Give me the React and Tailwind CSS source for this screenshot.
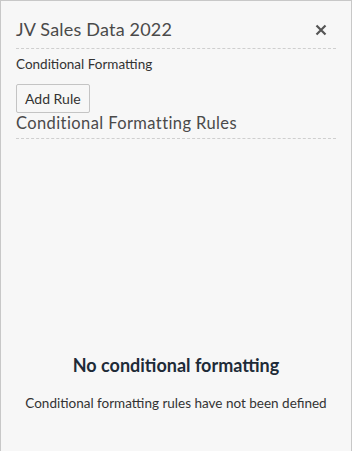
import React from 'react';

export default function App() {
  return (
    <div
      className="h-[451px] w-[352px] border-x border-t border-[#c8c8c8] bg-[#f7f7f7] px-[15px] flex flex-col"
      style={{ fontFamily: 'Lato, "Noto Sans", sans-serif' }}
    >
      <div className="flex items-center justify-between pt-[16px] pb-[7px] border-b border-dashed border-[#cfcfcf]">
        <h2 className="text-[18px] leading-[24px] tracking-[0.2px] text-[#4a4a4a]">JV Sales Data 2022</h2>
        <button className="mr-[9px] mt-[2px] text-[#555]" aria-label="Close">
          <svg width="12" height="12" viewBox="0 0 12 12">
            <path d="M1.5 1.5 L10.5 10.5 M10.5 1.5 L1.5 10.5" stroke="currentColor" strokeWidth="2.2" />
          </svg>
        </button>
      </div>

      <div className="pt-[6px] text-[13.5px] leading-[18px] text-[#333]">Conditional Formatting</div>

      <div className="pt-[11px]">
        <button className="h-[29px] px-[8px] rounded-[2px] border border-[#c4c4c4] bg-[#f7f7f7] text-[14px] text-[#333]">
          Add Rule
        </button>
      </div>

      <div className="pb-[4px] border-b border-dashed border-[#cfcfcf] text-[16.5px] leading-[21px] tracking-[0.4px] text-[#4a4a4a]">
        Conditional Formatting Rules
      </div>

      <div className="flex flex-col items-center pt-[215px]">
        <div className="text-[18px] font-bold leading-[22px] text-[#1e2b38]">No conditional formatting</div>
        <div className="pt-[18px] text-[13.5px] leading-[18px] text-[#333]">Conditional formatting rules have not been defined</div>
      </div>
    </div>
  );
}
